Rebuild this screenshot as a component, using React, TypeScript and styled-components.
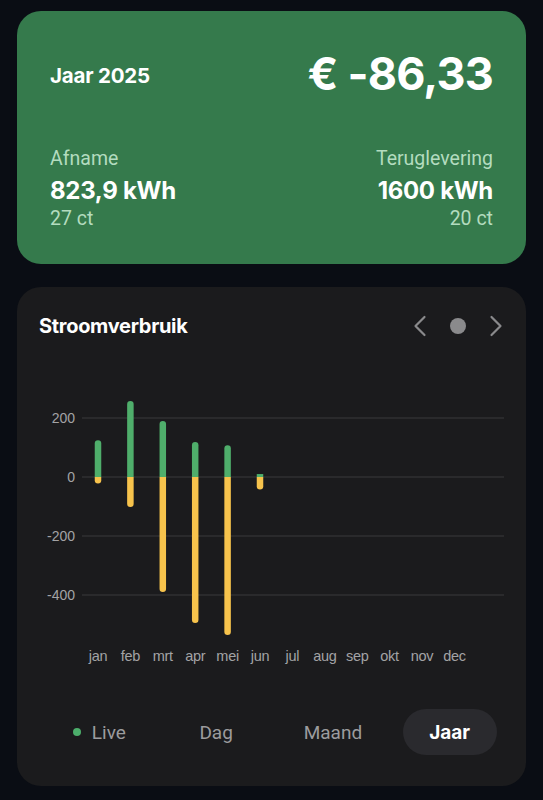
import React from "react";
import styled, { createGlobalStyle } from "styled-components";

const Global = createGlobalStyle`
  html, body { margin: 0; padding: 0; background: #0a0d14; }
  body { font-family: Roboto, "Noto Sans", sans-serif; -webkit-font-smoothing: antialiased; }
`;

const Page = styled.div`
  width: 543px;
  min-height: 800px;
  box-sizing: border-box;
  padding: 11px 17px 15px;
  display: flex;
  flex-direction: column;
  gap: 23px;
`;

const SummaryCard = styled.section`
  height: 253px;
  box-sizing: border-box;
  background: #357a4c;
  border-radius: 24px;
  padding: 39px 33px 0 33px;
  display: flex;
  flex-direction: column;
  color: #fff;
`;

const TopRow = styled.div`
  display: flex;
  justify-content: space-between;
  align-items: center;
  height: 48px;
`;

const Period = styled.div`
  font-family: Inter, sans-serif;
  font-weight: 700;
  font-size: 20.5px;
  letter-spacing: -0.2px;
  padding-top: 2px;
`;

const Total = styled.div`
  font-family: Inter, sans-serif;
  font-weight: 700;
  font-size: 45px;
  letter-spacing: -0.8px;
  line-height: 48px;
`;

const StatsRow = styled.div`
  display: flex;
  justify-content: space-between;
  margin-top: 49px;
`;

const Stat = styled.div<{ $align: "left" | "right" }>`
  display: flex;
  flex-direction: column;
  align-items: ${(p) => (p.$align === "left" ? "flex-start" : "flex-end")};
`;

const StatLabel = styled.div`
  font-size: 19.5px;
  color: #b3dcbf;
  line-height: 23px;
`;

const StatValue = styled.div`
  font-family: Inter, sans-serif;
  font-weight: 700;
  font-size: 24px;
  letter-spacing: -0.3px;
  line-height: 29px;
  margin-top: 6px;
`;

const StatPrice = styled.div`
  font-size: 19.5px;
  color: #b3dcbf;
  line-height: 23px;
  margin-top: 2px;
`;

const ChartCard = styled.section`
  background: #1b1b1d;
  border-radius: 24px;
  padding: 26px 22px 31px 22px;
  display: flex;
  flex-direction: column;
`;

const ChartHeader = styled.div`
  display: flex;
  justify-content: space-between;
  align-items: center;
  height: 26px;
`;

const ChartTitle = styled.h2`
  margin: 0;
  font-family: Inter, sans-serif;
  font-weight: 700;
  font-size: 20px;
  letter-spacing: -0.3px;
  color: #fff;
`;

const Nav = styled.div`
  display: flex;
  align-items: center;
  gap: 20px;
  margin-right: -2px;
`;

const NavButton = styled.button`
  background: none;
  border: 0;
  padding: 0;
  width: 20px;
  height: 26px;
  display: flex;
  align-items: center;
  justify-content: center;
  cursor: pointer;
`;

const Dot = styled.span`
  width: 16px;
  height: 16px;
  border-radius: 50%;
  background: #8a8a8c;
`;

const ChartSvg = styled.svg`
  display: block;
  margin-top: 11px;
`;

const Tabs = styled.div`
  display: grid;
  grid-template-columns: repeat(4, 1fr);
  align-items: center;
  margin: 39px -4px 0 0;
  padding: 0 0 0 2px;
`;

const Tab = styled.button<{ $active?: boolean }>`
  justify-self: center;
  display: flex;
  align-items: center;
  justify-content: center;
  gap: 11px;
  height: 46px;
  width: 94px;
  border: 0;
  border-radius: 23px;
  background: ${(p) => (p.$active ? "#2a2a2e" : "transparent")};
  color: ${(p) => (p.$active ? "#ffffff" : "#9c9c9e")};
  font-family: ${(p) => (p.$active ? "Inter, sans-serif" : "Roboto, sans-serif")};
  font-weight: ${(p) => (p.$active ? 700 : 400)};
  font-size: 19px;
  padding: 0;
  cursor: pointer;
`;

const LiveDot = styled.span`
  width: 8px;
  height: 8px;
  border-radius: 50%;
  background: #4cae6b;
`;

const Chevron = ({ dir }: { dir: "left" | "right" }) => (
  <svg width="14" height="24" viewBox="0 0 14 24" fill="none">
    <path
      d={dir === "left" ? "M11.5 3 L2.5 12 L11.5 21" : "M2.5 3 L11.5 12 L2.5 21"}
      stroke="#8a8a8c"
      strokeWidth="2.2"
      strokeLinecap="round"
      strokeLinejoin="round"
    />
  </svg>
);

const months = ["jan", "feb", "mrt", "apr", "mei", "jun", "jul", "aug", "sep", "okt", "nov", "dec"];
const data = [
  { pos: 125, neg: -22 },
  { pos: 258, neg: -102 },
  { pos: 190, neg: -390 },
  { pos: 119, neg: -495 },
  { pos: 108, neg: -536 },
  { pos: 10, neg: -42 },
];

const ZERO = 127;
const SCALE = 59 / 200;
const BAR_W = 6.5;
const colX = (i: number) => 59 + i * 32.4;

const topRounded = (x: number, y1: number, y2: number) => {
  const r = BAR_W / 2;
  const l = x - r;
  const rr = x + r;
  if (y2 - y1 < r) return `M${l},${y2} L${l},${y1} L${rr},${y1} L${rr},${y2} Z`;
  return `M${l},${y2} L${l},${y1 + r} A${r},${r} 0 0 1 ${rr},${y1 + r} L${rr},${y2} Z`;
};
const bottomRounded = (x: number, y1: number, y2: number) => {
  const r = BAR_W / 2;
  const l = x - r;
  const rr = x + r;
  return `M${l},${y1} L${l},${y2 - r} A${r},${r} 0 0 0 ${rr},${y2 - r} L${rr},${y1} Z`;
};

const Chart = () => (
  <ChartSvg width="465" height="320" viewBox="0 0 465 320">
    {[200, 0, -200, -400].map((v) => {
      const y = ZERO - v * SCALE;
      return (
        <g key={v}>
          <line x1="43" x2="465" y1={y} y2={y} stroke="#3a3a3c" strokeWidth="1" />
          <text
            x="36"
            y={y + 5}
            textAnchor="end"
            fill="#a3a3a5"
            fontSize="14"
            fontFamily="'Liberation Sans', Arial, sans-serif"
          >
            {v}
          </text>
        </g>
      );
    })}
    {data.map((d, i) => {
      const x = colX(i);
      return (
        <g key={i}>
          <path d={topRounded(x, ZERO - d.pos * SCALE, ZERO)} fill="#4fae6b" />
          <path d={bottomRounded(x, ZERO, ZERO - d.neg * SCALE)} fill="#f7c34c" />
        </g>
      );
    })}
    {months.map((m, i) => (
      <text
        key={m}
        x={colX(i)}
        y="311"
        textAnchor="middle"
        fill="#a3a3a5"
        fontSize="14.5"
        fontFamily="'Liberation Sans', Arial, sans-serif"
        letterSpacing="-0.3"
      >
        {m}
      </text>
    ))}
  </ChartSvg>
);

export default function App() {
  return (
    <>
      <Global />
      <Page>
        <SummaryCard>
          <TopRow>
            <Period>Jaar 2025</Period>
            <Total>€ -86,33</Total>
          </TopRow>
          <StatsRow>
            <Stat $align="left">
              <StatLabel>Afname</StatLabel>
              <StatValue>823,9 kWh</StatValue>
              <StatPrice>27 ct</StatPrice>
            </Stat>
            <Stat $align="right">
              <StatLabel>Teruglevering</StatLabel>
              <StatValue>1600 kWh</StatValue>
              <StatPrice>20 ct</StatPrice>
            </Stat>
          </StatsRow>
        </SummaryCard>
        <ChartCard>
          <ChartHeader>
            <ChartTitle>Stroomverbruik</ChartTitle>
            <Nav>
              <NavButton aria-label="Vorige">
                <Chevron dir="left" />
              </NavButton>
              <Dot />
              <NavButton aria-label="Volgende">
                <Chevron dir="right" />
              </NavButton>
            </Nav>
          </ChartHeader>
          <Chart />
          <Tabs>
            <Tab>
              <LiveDot />
              Live
            </Tab>
            <Tab>Dag</Tab>
            <Tab>Maand</Tab>
            <Tab $active>Jaar</Tab>
          </Tabs>
        </ChartCard>
      </Page>
    </>
  );
}
